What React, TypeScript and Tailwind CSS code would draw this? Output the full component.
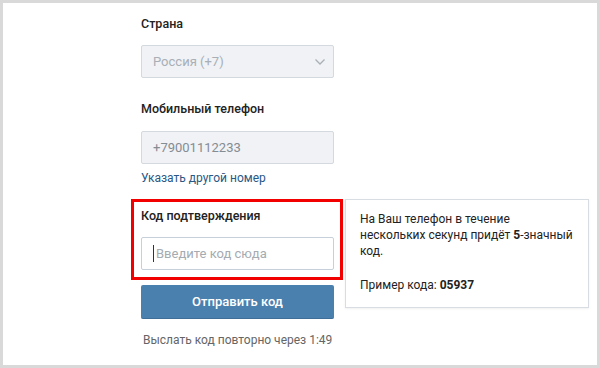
import React from "react";

export default function App() {
  return (
    <div
      className="w-[600px] h-[368px] border-[3px] border-[#d9d9d9] bg-white text-[13px] leading-[16px] text-[#222]"
      style={{ fontFamily: "Roboto, 'Open Sans', Arial, sans-serif" }}
    >
      <div className="pl-[128px] pt-[13px] flex flex-col items-start">
        <div className="ml-[10px] font-medium text-[12.5px]">Страна</div>
        <div className="ml-[10px] mt-[13px] w-[193px] h-[33px] rounded-[2px] border border-[#d3d9de] bg-[#f0f2f5] flex items-center justify-between pl-[11px] pr-[7px]">
          <span className="text-[#a8afb6]">Россия (+7)</span>
          <svg width="12" height="8" viewBox="0 0 12 8" fill="none">
            <path d="M1.5 1.5 L6 6 L10.5 1.5" stroke="#a9b0b7" strokeWidth="1.3" />
          </svg>
        </div>
        <div className="ml-[10px] mt-[23px] font-medium text-[12.5px]">Мобильный телефон</div>
        <div className="ml-[10px] mt-[14px] w-[193px] h-[33px] rounded-[2px] border border-[#d3d9de] bg-[#f0f2f5] flex items-center pl-[11px]">
          <span className="text-[#858c93]">+79001112233</span>
        </div>
        <div className="ml-[10px] mt-[6px] text-[12px] text-[#2a5885]">Указать другой номер</div>
        <div className="relative mt-[13px] w-[212px] border-[3px] border-[#f20000] pl-[7px] pr-[6px] pt-[6px] pb-[7px]">
          <div className="font-medium text-[12.5px]">Код подтверждения</div>
          <div className="mt-[13px] w-[193px] h-[33px] rounded-[2px] border border-[#c5d0db] bg-white flex items-center pl-[11px]">
            <span className="w-px h-[17px] bg-[#333] mr-[2px]" />
            <span className="text-[#a5abb1]">Введите код сюда</span>
          </div>
          <div className="absolute left-[211px] top-[-3px] w-[244px] border border-[#d7dde3] bg-white pl-[14px] pt-[11px] pb-[14px] whitespace-nowrap text-[12px] shadow-[0_1px_2px_rgba(0,0,0,0.06)]">
            <div>
              На Ваш телефон в течение
              <br />
              нескольких секунд придёт <b className="font-bold">5</b>-значный
              <br />
              код.
            </div>
            <div className="mt-[18px]">
              Пример кода: <b className="font-bold">05937</b>
            </div>
          </div>
        </div>
        <button className="ml-[10px] mt-[5px] w-[193px] h-[34px] rounded-[2px] bg-[#4a80ae] border-b border-[#3f6f99] text-white font-medium text-[13px]">
          Отправить код
        </button>
        <div className="ml-[12px] mt-[13px] text-[12px] text-[#656565]">Выслать код повторно через 1:49</div>
      </div>
    </div>
  );
}
